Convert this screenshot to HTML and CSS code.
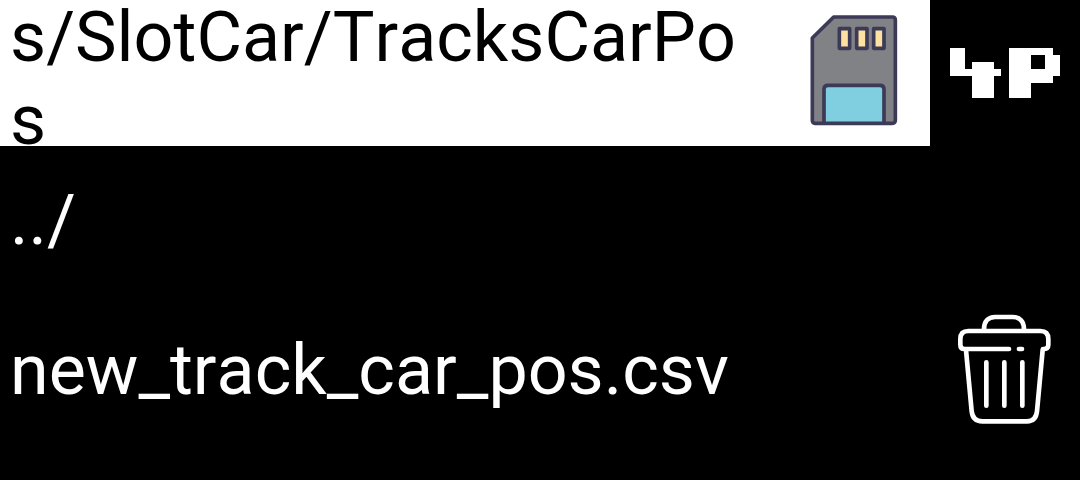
FILE: index.html
```html
<!DOCTYPE html>
<html lang="en">
<head>
<meta charset="utf-8">
<title>Track files</title>
<meta name="viewport" content="width=device-width, initial-scale=1">
<link rel="stylesheet" href="styles.css">
</head>
<body>
<header class="topbar">
  <h1 class="path">s/SlotCar/TracksCarPos</h1>
  <button class="icon-button storage" type="button" aria-label="Storage">
    <svg class="icon-sd" viewBox="0 0 420 438" aria-hidden="true">
      <path d="M131 51H307Q316 51 316 60V361Q316 370 307 370H75Q67 370 67 361V114Z" fill="#818286"/>
      <path d="M102 370V268Q102 256 114 256H270Q282 256 282 268V370Z" fill="#80cfe1"/>
      <g fill="none" stroke="#3c3a56" stroke-width="11" stroke-linejoin="round">
        <path d="M131 51H307Q316 51 316 60V361Q316 370 307 370H75Q67 370 67 361V114Z"/>
        <path d="M102 370V268Q102 256 114 256H270Q282 256 282 268V370"/>
      </g>
      <g fill="#fce1a0" stroke="#3c3a56" stroke-width="11" stroke-linejoin="round">
        <rect x="148" y="86" width="31" height="59"/>
        <rect x="200" y="86" width="31" height="59"/>
        <rect x="251" y="86" width="31" height="59"/>
      </g>
    </svg>
  </button>
  <button class="icon-button" type="button" aria-label="4P">
    <svg class="icon-logo" viewBox="0 -90 450 438" aria-hidden="true" fill="#fff" shape-rendering="crispEdges">
      <path d="M60 54H105V117H126V96H192V117H214V138H192V203H126V138H60Z"/>
      <path fill-rule="evenodd" d="M237 54H368V75H390V138H368V160H303V203H237ZM303 75V117H345V75Z"/>
    </svg>
  </button>
</header>
<main>
  <ul class="files">
    <li class="row"><a class="name" href="#parent">../</a></li>
    <li class="row">
      <a class="name" href="#file">new_track_car_pos.csv</a>
      <button class="icon-button" type="button" aria-label="Delete new_track_car_pos.csv">
        <svg class="icon-trash" viewBox="0 0 390 420" aria-hidden="true" fill="none" stroke="#fff" stroke-width="14" stroke-linecap="round" stroke-linejoin="round">
          <path d="M132 88C132 64 145 51 165 51H218C240 51 252 65 252 88"/>
          <path d="M207 147H74Q61 147 61 134V117Q61 93 85 93H301Q325 93 325 117V134Q325 147 309 147M237 147H246"/>
          <path d="M78 150L95 334Q98 364 127 364H261Q288 364 291 334L308 150"/>
          <path d="M139 187V317M193 187V317M247 187V317"/>
        </svg>
      </button>
    </li>
  </ul>
</main>
</body>
</html>
```
FILE: styles.css
```css
* {
  box-sizing: border-box;
}

body {
  margin: 0;
  background: #000;
  color: #fff;
  font-family: Roboto, "Liberation Sans", sans-serif;
  font-size: 70px;
  font-kerning: none;
  line-height: 83px;
}

.topbar {
  display: flex;
  height: 146px;
  overflow: hidden;
}

.path {
  flex: 1;
  min-width: 0;
  margin: -4px 0 0;
  padding: 0 20px 0 10px;
  font-size: inherit;
  font-weight: 400;
  word-break: break-all;
  color: #000;
  background: #fff;
}

.icon-button {
  display: flex;
  flex: none;
  align-items: center;
  justify-content: center;
  width: 150px;
  padding: 0;
  border: 0;
  background: transparent;
  cursor: pointer;
}

.storage {
  justify-content: flex-end;
  background: #fff;
}

.icon-sd {
  width: 140px;
  height: 146px;
}

.icon-logo {
  width: 150px;
  height: 146px;
}

.icon-trash {
  width: 130px;
  height: 140px;
}

.files {
  margin: 0;
  padding: 0;
  list-style: none;
}

.row {
  display: flex;
  align-items: center;
  min-height: 150px;
  border-bottom: 3px solid #000;
}

.name {
  flex: 1;
  min-width: 0;
  padding: 2px 10px 0;
  color: inherit;
  text-decoration: none;
  overflow-wrap: anywhere;
}
```
